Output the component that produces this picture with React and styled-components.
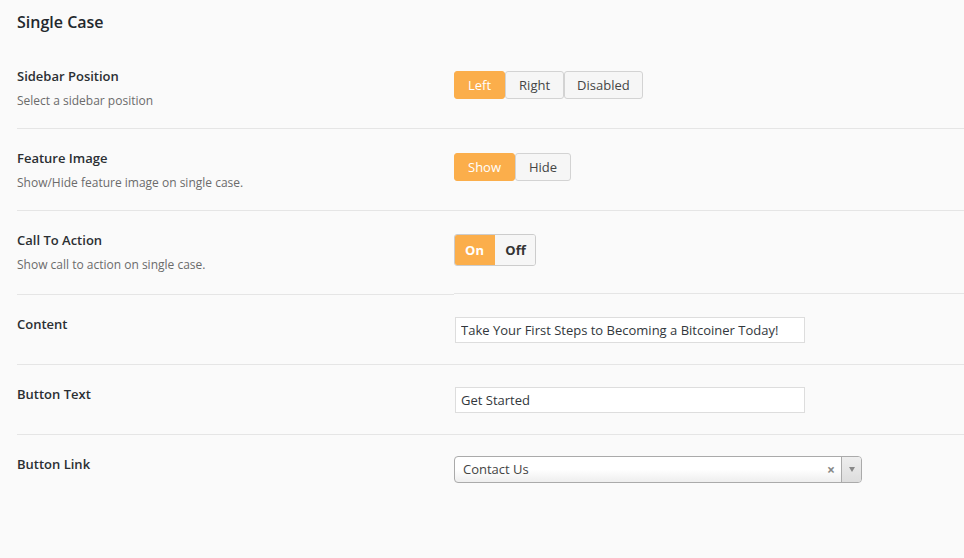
import React from 'react';
import styled, { createGlobalStyle } from 'styled-components';

const GlobalStyle = createGlobalStyle`
  html, body {
    margin: 0;
    padding: 0;
    background: #fafafa;
  }
  body {
    font-family: "Open Sans", "Noto Sans", sans-serif;
    font-size: 13px;
    color: #23282d;
  }
`;

const Page = styled.div`
  width: 964px;
  height: 558px;
  overflow: hidden;
  padding-left: 17px;
  box-sizing: border-box;
`;

const Title = styled.h2`
  margin: 0;
  padding-top: 11px;
  height: 35px;
  box-sizing: border-box;
  font-size: 16px;
  font-weight: 600;
  line-height: 22px;
  color: #23282d;
`;

const Table = styled.div`
  display: flex;
  flex-direction: column;
`;

const Row = styled.div`
  display: grid;
  grid-template-columns: 437px 1fr;
  height: ${(p) => p.$height}px;
  box-sizing: border-box;
`;

const Head = styled.div`
  padding-top: ${(p) => p.$top}px;
  box-sizing: border-box;
  border-bottom: ${(p) => (p.$last ? 'none' : '1px solid #e5e5e5')};
`;

const Cell = styled.div`
  padding-top: ${(p) => p.$top}px;
  box-sizing: border-box;
  border-bottom: ${(p) => (p.$last ? 'none' : '1px solid #e5e5e5')};
  margin-bottom: ${(p) => (p.$shift ? '1px' : '0')};
`;

const Label = styled.div`
  font-size: 13px;
  font-weight: 600;
  line-height: 20px;
  color: #2b2f33;
`;

const Desc = styled.div`
  margin-top: 5px;
  font-size: 12px;
  line-height: 20px;
  color: #6b6b6b;
`;

const ButtonSet = styled.div`
  display: flex;
`;

const SetButton = styled.button`
  height: 28px;
  padding: 0 ${(p) => p.$pad}px;
  margin: 0;
  border: 1px solid ${(p) => (p.$active ? '#fbae4b' : '#d3d3d3')};
  border-radius: 3px;
  background: ${(p) => (p.$active ? '#fbae4b' : '#f6f6f6')};
  color: ${(p) => (p.$active ? '#fff' : '#454545')};
  font-family: inherit;
  font-size: 13px;
  line-height: 26px;
  cursor: pointer;
`;

const Switch = styled.div`
  display: flex;
  height: 32px;
  width: 82px;
  border: 1px solid #ccc;
  border-radius: 3px;
  box-sizing: border-box;
  overflow: hidden;
`;

const SwitchPart = styled.div`
  flex: 0 0 ${(p) => p.$w}px;
  display: flex;
  align-items: center;
  justify-content: center;
  background: ${(p) => (p.$on ? '#fbae4b' : '#f6f6f6')};
  color: ${(p) => (p.$on ? '#fff' : '#333')};
  font-weight: 700;
  font-size: 13px;
  margin: ${(p) => (p.$on ? '-1px 0 -1px -1px' : '0')};
`;

const TextInput = styled.input`
  display: block;
  width: 350px;
  height: 26px;
  margin-left: 1px;
  padding: 0 5px;
  box-sizing: border-box;
  border: 1px solid #ddd;
  border-radius: 0;
  background: #fff;
  color: #32373c;
  font-family: inherit;
  font-size: 13px;
  outline: none;
`;

const Select = styled.div`
  display: flex;
  width: 408px;
  height: 27px;
  box-sizing: border-box;
  border: 1px solid #aaa;
  border-radius: 4px;
  background: linear-gradient(to bottom, #fff 0%, #fff 50%, #eee 100%);
  overflow: hidden;
`;

const SelectValue = styled.div`
  flex: 1;
  padding-left: 8px;
  line-height: 25px;
  font-size: 13px;
  color: #444;
`;

const Clear = styled.div`
  width: 20px;
  display: flex;
  align-items: center;
  justify-content: center;
  color: #888;
  font-size: 14px;
  font-weight: 700;
`;

const Arrow = styled.div`
  width: 19px;
  display: flex;
  align-items: center;
  justify-content: center;
  border-left: 1px solid #aaa;
  background: linear-gradient(to bottom, #eee 0%, #ddd 100%);
`;

const Caret = styled.span`
  width: 0;
  height: 0;
  border-left: 3px solid transparent;
  border-right: 3px solid transparent;
  border-top: 5px solid #888;
`;

const ButtonSetField = ({ options, active, pads }) => (
  <ButtonSet>
    {options.map((o, i) => (
      <SetButton key={o} $active={i === active} $pad={pads[i]}>
        {o}
      </SetButton>
    ))}
  </ButtonSet>
);

const App = () => (
  <Page>
    <GlobalStyle />
    <Title>Single Case</Title>
    <Table>
      <Row $height={94}>
        <Head $top={31}>
          <Label>Sidebar Position</Label>
          <Desc>Select a sidebar position</Desc>
        </Head>
        <Cell $top={36}>
          <ButtonSetField options={['Left', 'Right', 'Disabled']} active={0} pads={[13, 13, 12]} />
        </Cell>
      </Row>
      <Row $height={82}>
        <Head $top={19}>
          <Label>Feature Image</Label>
          <Desc>Show/Hide feature image on single case.</Desc>
        </Head>
        <Cell $top={24}>
          <ButtonSetField options={['Show', 'Hide']} active={0} pads={[13, 13]} />
        </Cell>
      </Row>
      <Row $height={84}>
        <Head $top={19}>
          <Label>Call To Action</Label>
          <Desc>Show call to action on single case.</Desc>
        </Head>
        <Cell $top={23} $shift>
          <Switch>
            <SwitchPart $on $w={41}>On</SwitchPart>
            <SwitchPart $w={41}>Off</SwitchPart>
          </Switch>
        </Cell>
      </Row>
      <Row $height={70}>
        <Head $top={19}>
          <Label>Content</Label>
        </Head>
        <Cell $top={22}>
          <TextInput defaultValue="Take Your First Steps to Becoming a Bitcoiner Today!" />
        </Cell>
      </Row>
      <Row $height={70}>
        <Head $top={19}>
          <Label>Button Text</Label>
        </Head>
        <Cell $top={22}>
          <TextInput defaultValue="Get Started" />
        </Cell>
      </Row>
      <Row $height={80}>
        <Head $top={19} $last>
          <Label>Button Link</Label>
        </Head>
        <Cell $top={21} $last>
          <Select>
            <SelectValue>Contact Us</SelectValue>
            <Clear>×</Clear>
            <Arrow>
              <Caret />
            </Arrow>
          </Select>
        </Cell>
      </Row>
    </Table>
  </Page>
);

export default App;
